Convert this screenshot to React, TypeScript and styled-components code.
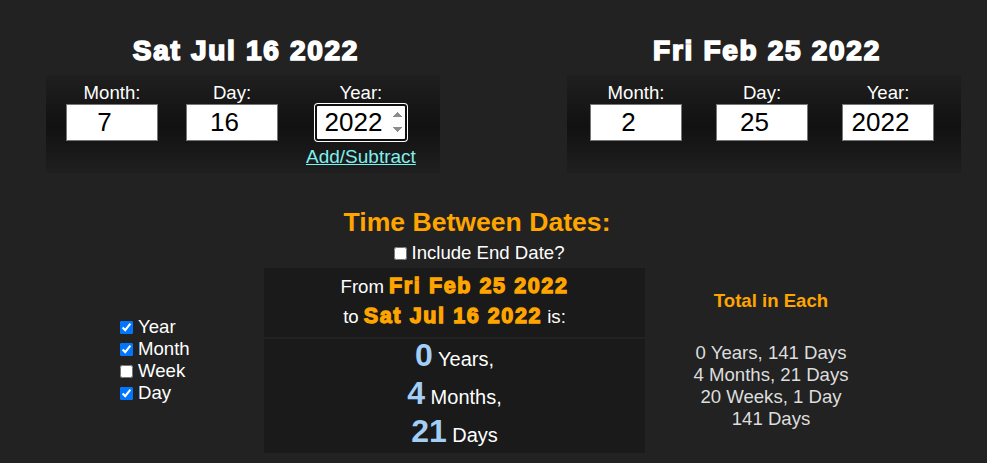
import React from 'react'
import styled, { createGlobalStyle } from 'styled-components'

const GlobalStyle = createGlobalStyle`
  html, body {
    margin: 0;
    padding: 0;
    background: #222;
  }
  body {
    font-family: 'Liberation Sans', Arial, sans-serif;
    font-size: 18.6px;
    color: #fff;
  }
`

const Page = styled.div`
  width: 987px;
  height: 463px;
  overflow: hidden;
  padding-top: 34px;
  box-sizing: border-box;
  background: #222;
`

const DateRow = styled.div`
  display: flex;
  gap: 127px;
  padding-left: 46px;
`

const DateColumn = styled.div`
  width: 394px;
  display: flex;
  flex-direction: column;
  align-items: center;
`

const DateHeading = styled.div`
  font-family: 'Arial Black', 'Liberation Sans', Arial, sans-serif;
  font-weight: 900;
  font-size: 28px;
  line-height: 33px;
  letter-spacing: 1.7px;
  -webkit-text-stroke: 1.7px #fff;
  margin-bottom: 8px;
  padding-left: 6px;
`

const Panel = styled.div<{ $pad: number; $gap: number }>`
  width: 394px;
  height: 98px;
  box-sizing: border-box;
  display: flex;
  align-items: flex-start;
  gap: ${(p) => p.$gap}px;
  padding: 7px 0 0 ${(p) => p.$pad}px;
  background: linear-gradient(#1f1f1f, #111 52%, #1f1f1f);
`

const Field = styled.div`
  display: flex;
  flex-direction: column;
  align-items: center;
`

const Label = styled.div`
  line-height: 22px;
`

const NumberInput = styled.input<{ $focused?: boolean }>`
  width: 92px;
  height: 37px;
  box-sizing: border-box;
  margin: 0;
  padding: 0;
  font-family: 'Liberation Sans', Arial, sans-serif;
  font-size: 26px;
  text-align: center;
  color: #000;
  background: #fff;
  border: ${(p) => (p.$focused ? '2px solid #101010' : '1px solid #767676')};
  border-radius: ${(p) => (p.$focused ? '3px' : '0')};
  box-shadow: ${(p) => (p.$focused ? '0 0 0 1px #fff' : 'none')};
  outline: none;

  &::-webkit-inner-spin-button {
    opacity: ${(p) => (p.$focused ? 1 : 0)};
  }
`

const AddLink = styled.a`
  margin-top: 5px;
  color: #7ff0ee;
  font-size: 19px;
  text-decoration: underline;
  line-height: 21px;
  cursor: pointer;
`

const TitleBlock = styled.div`
  width: 954px;
  margin-top: 34px;
  text-align: center;
`

const Title = styled.div`
  color: #ffa500;
  font-weight: 700;
  font-size: 26.6px;
  line-height: 31px;
`

const CheckLine = styled.label`
  display: inline-flex;
  align-items: center;
  margin-top: 4px;
  line-height: 22px;
`

const Check = styled.input`
  width: 13px;
  height: 13px;
  margin: 3px 5px 3px 4px;
`

const ResultGrid = styled.div`
  display: grid;
  grid-template-columns: 264px 381px 252px;
  align-items: center;
  margin-top: 3px;
`

const UnitList = styled.div`
  display: flex;
  flex-direction: column;
  padding-left: 116px;
`

const UnitRow = styled.label`
  display: flex;
  align-items: center;
  height: 22px;
`

const ResultBox = styled.div`
  display: flex;
  flex-direction: column;
  gap: 2px;
`

const Summary = styled.div`
  background: #1a1a1a;
  padding: 4px 0 5px;
  text-align: center;
`

const SummaryLine = styled.div`
  height: 30px;
  line-height: 30px;
`

const DateStrong = styled.span`
  font-family: 'Arial Black', 'Liberation Sans', Arial, sans-serif;
  font-weight: 900;
  font-size: 21.5px;
  line-height: 1;
  letter-spacing: 1.6px;
  color: #ffa500;
  -webkit-text-stroke: 1.3px #ffa500;
`

const Breakdown = styled.div`
  background: #1a1a1a;
  text-align: center;
  font-size: 20px;
`

const BreakdownLine = styled.div`
  height: 38px;
  line-height: 38px;
`

const Amount = styled.span`
  font-weight: 700;
  font-size: 32px;
  line-height: 1;
  color: #a3cff7;
`

const Totals = styled.div`
  text-align: center;
  color: #ddd;
`

const TotalsTitle = styled.div`
  color: #ffa500;
  font-weight: 700;
  line-height: 22px;
  margin-bottom: 30px;
`

const TotalLine = styled.div`
  line-height: 22px;
`

const units = [
  { name: 'Year', checked: true },
  { name: 'Month', checked: true },
  { name: 'Week', checked: false },
  { name: 'Day', checked: true },
]

const breakdown = [
  { value: 0, unit: 'Years,' },
  { value: 4, unit: 'Months,' },
  { value: 21, unit: 'Days' },
]

const totals = ['0 Years, 141 Days', '4 Months, 21 Days', '20 Weeks, 1 Day', '141 Days']

const App: React.FC = () => {
  return (
    <>
      <GlobalStyle />
      <Page>
        <DateRow>
          <DateColumn>
            <DateHeading>Sat Jul 16 2022</DateHeading>
            <Panel $pad={20} $gap={28}>
              <Field>
                <Label>Month:</Label>
                <NumberInput type="number" defaultValue={7} />
              </Field>
              <Field>
                <Label>Day:</Label>
                <NumberInput type="number" defaultValue={16} />
              </Field>
              <Field>
                <Label>Year:</Label>
                <NumberInput type="number" defaultValue={2022} $focused />
                <AddLink>Add/Subtract</AddLink>
              </Field>
            </Panel>
          </DateColumn>
          <DateColumn>
            <DateHeading>Fri Feb 25 2022</DateHeading>
            <Panel $pad={23} $gap={34}>
              <Field>
                <Label>Month:</Label>
                <NumberInput type="number" defaultValue={2} />
              </Field>
              <Field>
                <Label>Day:</Label>
                <NumberInput type="number" defaultValue={25} />
              </Field>
              <Field>
                <Label>Year:</Label>
                <NumberInput type="number" defaultValue={2022} />
              </Field>
            </Panel>
          </DateColumn>
        </DateRow>

        <TitleBlock>
          <Title>Time Between Dates:</Title>
          <CheckLine>
            <Check type="checkbox" />
            Include End Date?
          </CheckLine>
        </TitleBlock>

        <ResultGrid>
          <UnitList>
            {units.map((u) => (
              <UnitRow key={u.name}>
                <Check type="checkbox" defaultChecked={u.checked} />
                {u.name}
              </UnitRow>
            ))}
          </UnitList>

          <ResultBox>
            <Summary>
              <SummaryLine>
                From <DateStrong>Fri Feb 25 2022</DateStrong>
              </SummaryLine>
              <SummaryLine>
                to <DateStrong>Sat Jul 16 2022</DateStrong> is:
              </SummaryLine>
            </Summary>
            <Breakdown>
              {breakdown.map((b) => (
                <BreakdownLine key={b.unit}>
                  <Amount>{b.value}</Amount> {b.unit}
                </BreakdownLine>
              ))}
            </Breakdown>
          </ResultBox>

          <Totals>
            <TotalsTitle>Total in Each</TotalsTitle>
            {totals.map((t) => (
              <TotalLine key={t}>{t}</TotalLine>
            ))}
          </Totals>
        </ResultGrid>
      </Page>
    </>
  )
}

export default App
